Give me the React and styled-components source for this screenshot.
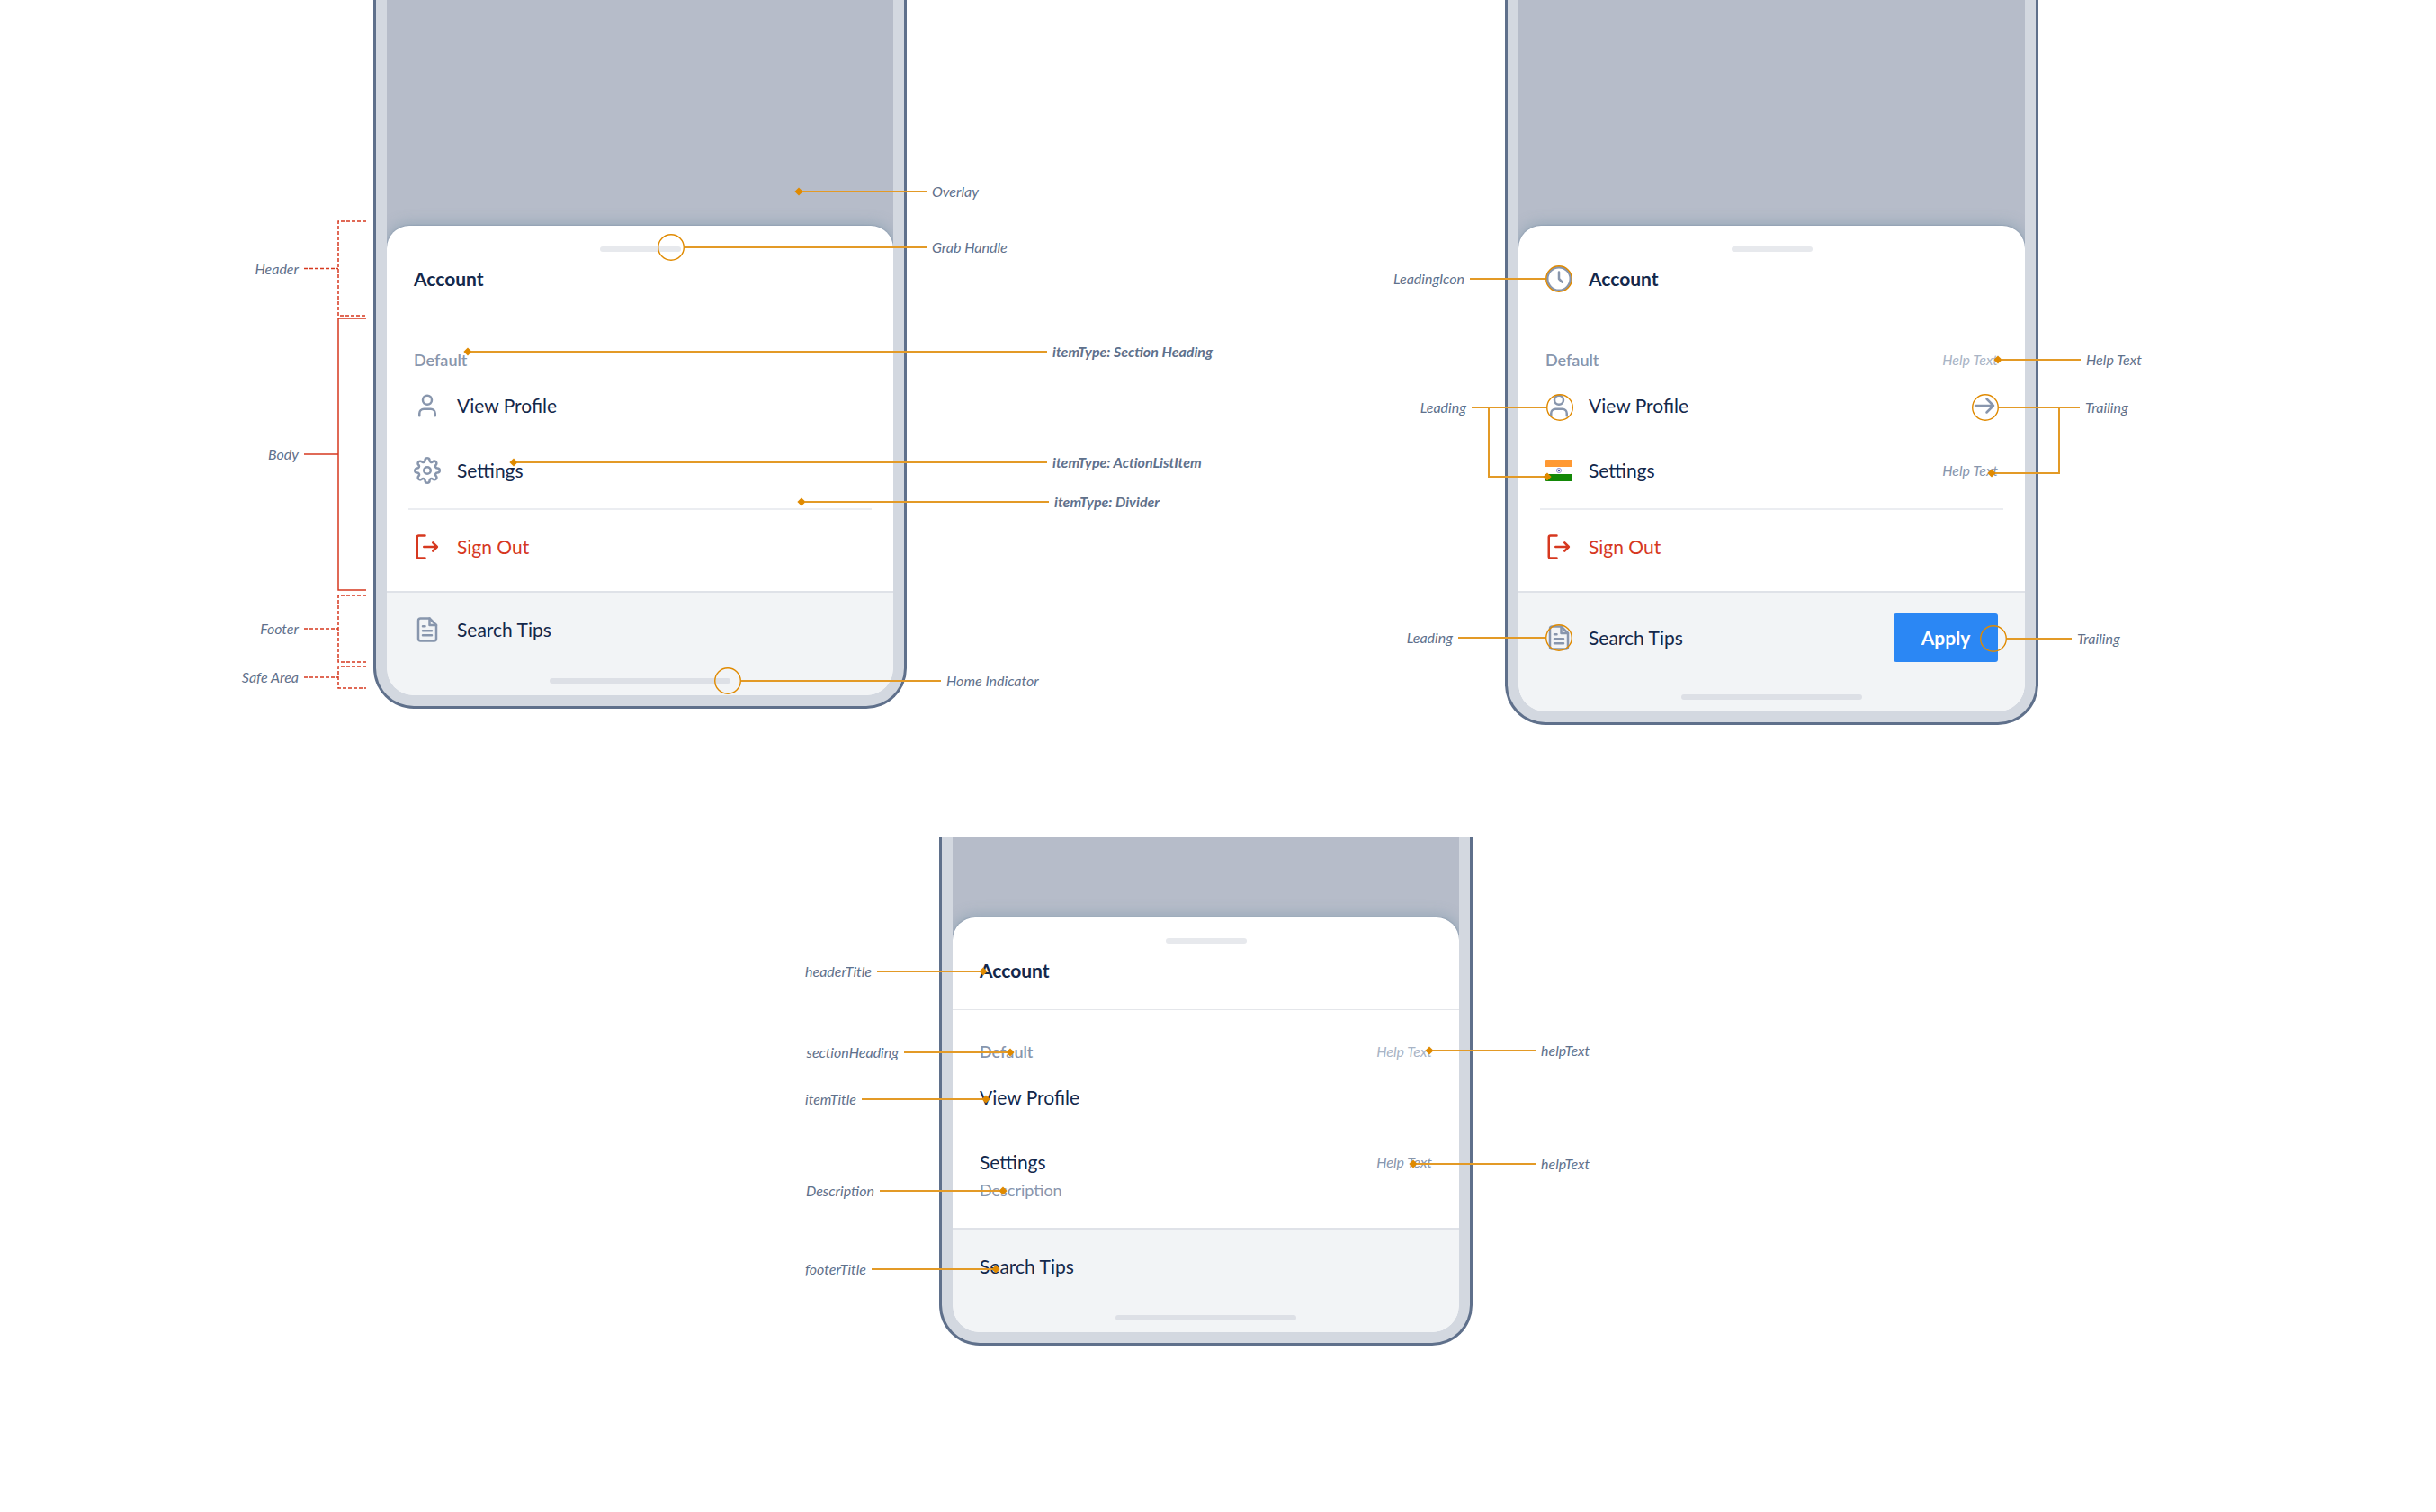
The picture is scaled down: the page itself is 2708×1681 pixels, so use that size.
import React from "react";
import styled, { createGlobalStyle, css } from "styled-components";
import { User } from "lucide-react";
import { FiSettings } from "react-icons/fi";

const color = {
  ink: "#14284b",
  muted: "#8896ad",
  faint: "#a9b4c5",
  label: "#5f718c",
  danger: "#d6381f",
  callout: "#e08a00",
  calloutLine: "#e39a26",
  frame: "#5f708b",
  bezel: "#d3d8e0",
  overlay: "#b6bcc9",
  footer: "#f2f4f6",
  primary: "#2b87f4",
};

const GlobalStyle = createGlobalStyle`
  *, *::before, *::after { box-sizing: border-box; }
  body {
    margin: 0;
    background: #ffffff;
    font-family: Lato, "Open Sans", sans-serif;
    overflow-x: hidden;
  }
`;

/* ---------- page ---------- */

const Page = styled.main`
  display: flex;
  flex-direction: column;
  align-items: center;
  gap: 124px;
  padding: 0 27px 180px 0;
`;

const TopRow = styled.div`
  display: flex;
  flex-wrap: wrap;
  justify-content: space-between;
  align-items: flex-start;
  width: 100%;
  max-width: 1851px;
  row-gap: 124px;
`;

/* ---------- phone ---------- */

const Figure = styled.figure`
  position: relative;
  width: 593px;
  margin: 0;
`;

const Frame = styled.div`
  padding: 0 12px 12px;
  background: ${color.bezel};
  border: 3px solid ${color.frame};
  border-top: 0;
  border-radius: 0 0 45px 45px;
`;

const Screen = styled.div`
  padding-top: ${(p) => p.$overlay}px;
  overflow: hidden;
  background: ${color.overlay};
  border-radius: 0 0 30px 30px;
`;

const Sheet = styled.section`
  background: #ffffff;
  border-radius: 25px 25px 0 0;
  box-shadow: 0 0 2px rgba(90, 110, 140, 0.6), 0 -2px 16px rgba(105, 140, 160, 0.45);
`;

const SheetHeader = styled.header`
  display: flex;
  flex-direction: column;
  gap: 15px;
  padding: 23px 30px 28px;
  border-bottom: 1px solid #e4e6ea;
`;

const Grabber = styled.div`
  align-self: center;
  width: 90px;
  height: 6px;
  border-radius: 3px;
  background: #e7e9ed;
`;

const TitleRow = styled.div`
  display: flex;
  align-items: center;
  gap: 18px;
  height: 30px;
`;

const Title = styled.h2`
  margin: 0;
  color: ${color.ink};
  font-size: 21px;
  line-height: 24px;
  font-weight: 700;
`;

const Body = styled.div`
  padding: 30px 0 13px;
`;

const SectionHeading = styled.div`
  display: flex;
  align-items: center;
  justify-content: space-between;
  height: 31px;
  padding: 0 30px;
`;

const Heading = styled.h3`
  margin: 0;
  color: ${color.muted};
  font-size: 18px;
  line-height: 24px;
  font-weight: 600;
`;

const HelpText = styled.span`
  color: ${(p) => (p.$faint ? color.faint : color.muted)};
  font-size: 16px;
  line-height: 24px;
  font-style: italic;
`;

const List = styled.ul`
  margin: 0;
  padding: 0;
  list-style: none;
`;

const Item = styled.button`
  display: flex;
  align-items: flex-start;
  gap: 18px;
  width: 100%;
  padding: ${(p) => (p.$described ? "21px 30px 17px" : "21px 30px")};
  border: 0;
  background: none;
  color: ${(p) => (p.$danger ? color.danger : color.ink)};
  font: inherit;
  font-size: 21px;
  line-height: 30px;
  text-align: left;
`;

const ItemText = styled.span`
  flex: 1;
  display: flex;
  flex-direction: column;
  gap: 4px;
`;

const ItemDescription = styled.span`
  color: ${color.muted};
  font-size: 18px;
  line-height: 24px;
`;

const Slot = styled.span`
  display: flex;
  align-items: center;
  justify-content: flex-end;
  min-width: 30px;
  height: 30px;
  color: ${(p) => (p.$danger ? color.danger : color.muted)};
`;

const Divider = styled.hr`
  height: 2px;
  margin: 6px 24px 5px;
  border: 0;
  background: #ebedf1;
`;

const SheetFooter = styled.footer`
  padding-bottom: 13px;
  background: ${color.footer};
  border-top: 2px solid #dfe2e8;
`;

const FooterRow = styled.div`
  display: flex;
  align-items: center;
  gap: 18px;
  min-height: 82px;
  padding: 23px 30px;
  margin-bottom: 13px;
`;

const FooterTitle = styled.span`
  flex: 1;
  color: ${color.ink};
  font-size: 21px;
  line-height: 24px;
`;

const ApplyButton = styled.button`
  width: 116px;
  height: 54px;
  border: 0;
  border-radius: 3px;
  background: ${color.primary};
  color: #ffffff;
  font-family: inherit;
  font-size: 21px;
  line-height: 24px;
  font-weight: 700;
`;

const HomeIndicator = styled.div`
  width: 201px;
  height: 6px;
  margin: 0 auto;
  border-radius: 3px;
  background: #dde0e6;
`;

/* ---------- annotations ---------- */

const CalloutBox = styled.div`
  position: absolute;
  top: ${(p) => p.$y - 15}px;
  display: flex;
  align-items: center;
  height: 30px;
  ${(p) =>
    p.$side === "left"
      ? css`right: calc(100% - ${p.$x}px);`
      : css`left: ${p.$x}px; flex-direction: row-reverse;`}
`;

const Line = styled.span`
  flex: none;
  width: ${(p) => p.$length}px;
  height: 2px;
  background: ${color.calloutLine};
`;

const Label = styled.span`
  margin: 0 6px;
  color: ${color.label};
  font-size: 16px;
  line-height: 20px;
  font-style: italic;
  font-weight: ${(p) => (p.$strong ? 700 : 400)};
  white-space: nowrap;
`;

const DiamondMark = styled.svg`
  flex: none;
  display: block;
  width: 10px;
  height: 10px;
  margin: 0 -1px;
`;

const RingMark = styled.svg`
  flex: none;
  display: block;
  width: 30px;
  height: 30px;
`;

const Branch = styled.div`
  position: absolute;
  top: ${(p) => p.$y}px;
  left: ${(p) => p.$x}px;
  width: ${(p) => p.$width}px;
  height: ${(p) => p.$height}px;
  border: 0 solid ${color.calloutLine};
  border-bottom-width: 2px;
  ${(p) => (p.$side === "left" ? "border-left-width: 2px;" : "border-right-width: 2px;")}
  display: flex;
  align-items: flex-end;
  justify-content: ${(p) => (p.$side === "left" ? "flex-end" : "flex-start")};

  svg {
    margin: 0 -5px -6px;
  }
`;

const RegionBox = styled.div`
  position: absolute;
  top: ${(p) => p.$y}px;
  right: calc(100% + 8px);
  display: flex;
  align-items: center;
  height: ${(p) => p.$height}px;
`;

const Diamond = () => (
  <DiamondMark viewBox="0 0 10 10" aria-hidden="true">
    <path d="M5 0.4L9.6 5L5 9.6L0.4 5z" fill={color.callout} />
  </DiamondMark>
);

const Ring = () => (
  <RingMark viewBox="0 0 30 30" aria-hidden="true">
    <circle cx="15" cy="15" r="14.3" fill="none" stroke={color.callout} strokeWidth="1.4" />
  </RingMark>
);

/* x is the outer edge of the marker, measured from the left of the phone */
const Callout = ({ side = "right", x, y, length, ring, strong, children }) => (
  <CalloutBox $side={side} $x={x} $y={y}>
    <Label $strong={strong}>{children}</Label>
    <Line $length={length} />
    {ring ? <Ring /> : <Diamond />}
  </CalloutBox>
);

const Region = ({ y, height, dashed, children }) => {
  const mid = height / 2;
  return (
    <RegionBox $y={y} $height={height}>
      <Label>{children}</Label>
      <svg width="69" height={height} fill="none" stroke={color.danger} strokeWidth="1.5" strokeDasharray={dashed ? "4 2" : undefined} aria-hidden="true">
        <path d={`M69 1H38V${height - 1}H69`} />
        <path d={`M0 ${mid}H38`} />
      </svg>
    </RegionBox>
  );
};

/* ---------- icons ---------- */

const Glyph = ({ children }) => (
  <svg width="30" height="30" viewBox="0 0 24 24" fill="none" stroke="currentColor" strokeWidth="2" strokeLinecap="round" strokeLinejoin="round" aria-hidden="true">
    {children}
  </svg>
);

const SignOutIcon = () => (
  <Glyph>
    <path d="M10 2H4.5A1.5 1.5 0 0 0 3 3.5V20.5A1.5 1.5 0 0 0 4.5 22H10" />
    <path d="M9 12H20.5M17 8.3L20.7 12L17 15.7" />
  </Glyph>
);

const FileIcon = () => (
  <Glyph>
    <path d="M14 2H6a2 2 0 0 0-2 2v16a2 2 0 0 0 2 2h12a2 2 0 0 0 2-2V8z" />
    <path d="M14 2v6h6M10 9H8M16 13H8M16 17H8" />
  </Glyph>
);

const ClockIcon = () => (
  <Glyph>
    <circle cx="12" cy="12" r="10.2" />
    <path d="M12 6v6l3 3" />
  </Glyph>
);

const ArrowIcon = () => (
  <Glyph>
    <path d="M4 12h16M14 6l6 6-6 6" />
  </Glyph>
);

const FlagIcon = () => (
  <svg width="30" height="24" viewBox="0 0 30 24" aria-hidden="true">
    <path d="M1 0h28a1 1 0 0 1 1 1v7H0V1a1 1 0 0 1 1-1z" fill="#ff9933" />
    <path d="M0 8h30v8H0z" fill="#ffffff" />
    <path d="M0 16h30v7a1 1 0 0 1-1 1H1a1 1 0 0 1-1-1z" fill="#138808" />
    <circle cx="15" cy="12" r="2.6" fill="none" stroke="#7c7cc8" strokeWidth="0.8" />
    <circle cx="15" cy="12" r="1.2" fill="#4a4ab0" />
  </svg>
);

/* ---------- sheet parts ---------- */

const Row = ({ leading, trailing, description, danger, children }) => (
  <li>
    <Item type="button" $danger={danger} $described={Boolean(description)}>
      {leading && <Slot $danger={danger}>{leading}</Slot>}
      <ItemText>
        {children}
        {description && <ItemDescription>{description}</ItemDescription>}
      </ItemText>
      {trailing && <Slot>{trailing}</Slot>}
    </Item>
  </li>
);

const Header = ({ leading }) => (
  <SheetHeader>
    <Grabber />
    <TitleRow>
      {leading && <Slot>{leading}</Slot>}
      <Title>Account</Title>
    </TitleRow>
  </SheetHeader>
);

const Section = ({ help }) => (
  <SectionHeading>
    <Heading>Default</Heading>
    {help && <HelpText $faint>Help Text</HelpText>}
  </SectionHeading>
);

const Footer = ({ leading, trailing }) => (
  <SheetFooter>
    <FooterRow>
      {leading && <Slot>{leading}</Slot>}
      <FooterTitle>Search Tips</FooterTitle>
      {trailing}
    </FooterRow>
    <HomeIndicator />
  </SheetFooter>
);

const Phone = ({ overlay, header, footer, annotations, children }) => (
  <Figure>
    <Frame>
      <Screen $overlay={overlay}>
        <Sheet>
          {header}
          <Body>{children}</Body>
          {footer}
        </Sheet>
      </Screen>
    </Frame>
    {annotations}
  </Figure>
);

const StructurePhone = () => (
  <Phone
    overlay={251}
    header={<Header />}
    footer={<Footer leading={<FileIcon />} />}
    annotations={
      <>
        <Region y={245} height={107} dashed>Header</Region>
        <Region y={353} height={304}>Body</Region>
        <Region y={661} height={76} dashed>Footer</Region>
        <Region y={740} height={26} dashed>Safe Area</Region>
        <Callout x={469} y={213} length={138}>Overlay</Callout>
        <Callout x={316} y={275} length={269} ring>Grab Handle</Callout>
        <Callout x={101} y={391} length={640} strong>itemType: Section Heading</Callout>
        <Callout x={152} y={514} length={589} strong>itemType: ActionListItem</Callout>
        <Callout x={472} y={558} length={271} strong>itemType: Divider</Callout>
        <Callout x={379} y={757} length={222} ring>Home Indicator</Callout>
      </>
    }
  >
    <Section />
    <List>
      <Row leading={<User size={30} />}>View Profile</Row>
      <Row leading={<FiSettings size={30} />}>Settings</Row>
    </List>
    <Divider />
    <List>
      <Row leading={<SignOutIcon />} danger>Sign Out</Row>
    </List>
  </Phone>
);

const SlotsPhone = () => (
  <Phone
    overlay={251}
    header={<Header leading={<ClockIcon />} />}
    footer={<Footer leading={<FileIcon />} trailing={<ApplyButton type="button">Apply</ApplyButton>} />}
    annotations={
      <>
        <Callout side="left" x={75} y={310} length={84} ring>LeadingIcon</Callout>
        <Callout side="left" x={76} y={453} length={83} ring>Leading</Callout>
        <Branch $side="left" $x={-19} $y={453} $width={66} $height={78}><Diamond /></Branch>
        <Callout side="left" x={75} y={709} length={97} ring>Leading</Callout>
        <Callout x={544} y={400} length={88}>Help Text</Callout>
        <Callout x={519} y={453} length={90} ring>Trailing</Callout>
        <Branch $side="right" $x={541} $y={453} $width={76} $height={74}><Diamond /></Branch>
        <Callout x={528} y={710} length={72} ring>Trailing</Callout>
      </>
    }
  >
    <Section help />
    <List>
      <Row leading={<User size={30} />} trailing={<ArrowIcon />}>View Profile</Row>
      <Row leading={<FlagIcon />} trailing={<HelpText>Help Text</HelpText>}>Settings</Row>
    </List>
    <Divider />
    <List>
      <Row leading={<SignOutIcon />} danger>Sign Out</Row>
    </List>
  </Phone>
);

const TextPhone = () => (
  <Phone
    overlay={90}
    header={<Header />}
    footer={<Footer />}
    annotations={
      <>
        <Callout side="left" x={53} y={150} length={114}>headerTitle</Callout>
        <Callout side="left" x={83} y={240} length={114}>sectionHeading</Callout>
        <Callout side="left" x={56} y={292} length={134}>itemTitle</Callout>
        <Callout side="left" x={75} y={394} length={133}>Description</Callout>
        <Callout side="left" x={67} y={481} length={134}>footerTitle</Callout>
        <Callout x={541} y={238} length={114}>helpText</Callout>
        <Callout x={523} y={364} length={132}>helpText</Callout>
      </>
    }
  >
    <Section help />
    <List>
      <Row>View Profile</Row>
      <Row description="Description" trailing={<HelpText>Help Text</HelpText>}>Settings</Row>
    </List>
  </Phone>
);

export default function App() {
  return (
    <>
      <GlobalStyle />
      <Page>
        <TopRow>
          <StructurePhone />
          <SlotsPhone />
        </TopRow>
        <TextPhone />
      </Page>
    </>
  );
}
